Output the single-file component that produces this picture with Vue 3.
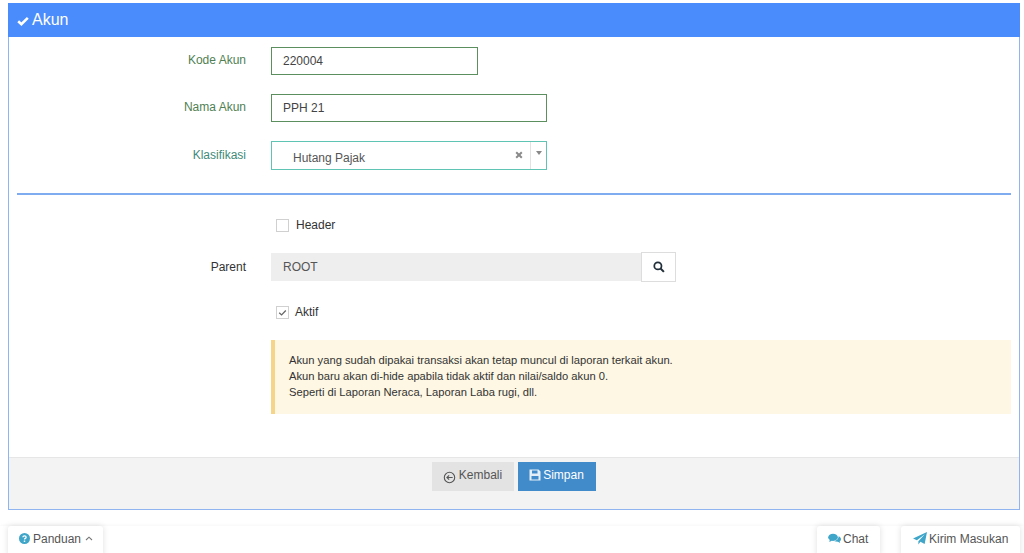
<script setup>
const notes = [
  'Akun yang sudah dipakai transaksi akan tetap muncul di laporan terkait akun.',
  'Akun baru akan di-hide apabila tidak aktif dan nilai/saldo akun 0.',
  'Seperti di Laporan Neraca, Laporan Laba rugi, dll.'
]
</script>

<template>
  <div class="page">
    <section class="panel">
      <header class="panel-head">
        <svg class="head-check" viewBox="0 0 12 10" width="12" height="10"><path d="M1.2 5.2 4.4 8.2 10.8 1.8" fill="none" stroke="#fff" stroke-width="2.6"/></svg>
        <span>Akun</span>
      </header>
      <div class="panel-body">
        <div class="row row-kode">
          <label class="lbl green">Kode Akun</label>
          <div class="field short green-b">220004</div>
        </div>
        <div class="row row-nama">
          <label class="lbl green">Nama Akun</label>
          <div class="field wide green-b">PPH 21</div>
        </div>
        <div class="row row-klas">
          <label class="lbl teal">Klasifikasi</label>
          <div class="select">
            <span class="sel-text">Hutang Pajak</span>
            <svg class="sel-x" viewBox="0 0 8 8" width="8" height="8"><path d="M1.2 1.2 6.8 6.8M6.8 1.2 1.2 6.8" stroke="#8a8a8a" stroke-width="2"/></svg>
            <span class="sel-arrow"><i></i></span>
          </div>
        </div>
        <hr class="rule" />
        <div class="row check-row header-row">
          <span class="box"></span>
          <span class="check-text">Header</span>
        </div>
        <div class="row row-parent">
          <label class="lbl dark">Parent</label>
          <div class="group">
            <div class="readonly">ROOT</div>
            <button class="search" type="button">
              <svg viewBox="0 0 13 13" width="12" height="12"><circle cx="5.3" cy="5.3" r="3.9" fill="none" stroke="#222f3a" stroke-width="1.9"/><path d="M8.2 8.2 11.8 11.8" stroke="#222f3a" stroke-width="2.2"/></svg>
            </button>
          </div>
        </div>
        <div class="row check-row aktif-row">
          <span class="box">
            <svg viewBox="0 0 12 12" width="11" height="11"><path d="M2.4 6.2 5 8.6 9.6 3.8" fill="none" stroke="#666" stroke-width="1.4"/></svg>
          </span>
          <span class="check-text aktif">Aktif</span>
        </div>
        <div class="alert">
          <div v-for="n in notes" :key="n">{{ n }}</div>
        </div>
      </div>
      <footer class="panel-foot">
        <button class="btn back" type="button">
          <svg viewBox="0 0 14 14" width="13" height="13"><circle cx="7" cy="7" r="5.6" fill="none" stroke="#555" stroke-width="1.2"/><path d="M10.4 7H4.4M6.6 4.6 4.2 7l2.4 2.4" fill="none" stroke="#555" stroke-width="1.2"/></svg>
          <span>Kembali</span>
        </button>
        <button class="btn save" type="button">
          <svg viewBox="0 0 12 12" width="12" height="12"><path fill-rule="evenodd" d="M0.5 0.5H9.5L11.5 2.5V11.5H0.5ZM3 1.5V4.5H8.5V1.5ZM2.5 7V10.5H9.5V7Z" fill="#e4eef7"/></svg>
          <span>Simpan</span>
        </button>
      </footer>
    </section>
    <div class="dock">
      <button class="tab guide" type="button">
        <svg viewBox="0 0 12 12" width="11" height="11"><circle cx="6" cy="6" r="6" fill="#3fa5c9"/><path d="M4.2 4.6C4.3 2.7 7.8 2.7 7.8 4.6 7.8 6 6 5.8 6 7.2" fill="none" stroke="#fff" stroke-width="1.4"/><rect x="5.2" y="8.2" width="1.6" height="1.5" fill="#fff"/></svg>
        Panduan
        <svg class="chev" viewBox="0 0 8 5" width="8" height="5"><path d="M1 4 4 1.2 7 4" fill="none" stroke="#777" stroke-width="1.1"/></svg>
      </button>
      <div class="dock-right">
        <button class="tab chat" type="button">
          <svg viewBox="0 0 14 11" width="13" height="11"><ellipse cx="5.4" cy="4.2" rx="5.2" ry="3.9" fill="#3fa5c9"/><path d="M2 6.5 1.4 9.2 4.6 7.6Z" fill="#3fa5c9"/><path d="M11.4 3.2C13 4 14 5 14 6.2 14 7.3 13.3 8 12.6 8.4L13.2 10.4 10.6 9C9 9 7.6 8.8 6.6 8.2 9.2 8 11.6 6 11.4 3.2Z" fill="#3fa5c9"/></svg>
          Chat
        </button>
        <button class="tab send" type="button">
          <svg viewBox="0 0 13 12" width="14" height="13"><path d="M13 0 10.8 11 6.9 9.1 5 11.6V8.5L11 2 3.6 7.7 0 6Z" fill="#3fa5c9"/></svg>
          Kirim Masukan
        </button>
      </div>
    </div>
  </div>
</template>

<style scoped>
.page {
  width: 1024px;
  height: 553px;
  overflow: hidden;
  padding: 3px 4px 0 8px;
  box-sizing: border-box;
  font-family: "Liberation Sans", Arial, sans-serif;
  font-size: 12px;
  color: #333;
  background: #fff;
}
.panel {
  height: 507px;
  box-sizing: border-box;
  border: 1px solid #8fb4ef;
  border-top: 0;
  display: flex;
  flex-direction: column;
}
.panel-head {
  height: 34px;
  margin: 0 -1px;
  padding-left: 9px;
  display: flex;
  align-items: center;
  gap: 3px;
  background: #4a8cfb;
  color: #fff;
  font-size: 16px;
  flex: none;
}
.head-check { margin-top: 1px; }
.panel-body {
  flex: 1;
  padding: 10px 8px 0 8px;
}
.row { display: flex; }
.lbl {
  width: 229px;
  text-align: right;
  margin-right: 25px;
  flex: none;
}
.green { color: #4f7f52; }
.teal { color: #3f8a78; }
.dark { color: #333; }
.field {
  height: 28px;
  box-sizing: border-box;
  padding-left: 11px;
  line-height: 26px;
  color: #444;
}
.green-b { border: 1px solid #5b8f5e; }
.short { width: 207px; }
.wide { width: 276px; }
.row-kode .lbl { line-height: 26px; }
.row-nama { margin-top: 19px; }
.row-nama .lbl { line-height: 26px; }
.row-klas { margin-top: 19px; }
.row-klas .lbl { line-height: 28px; }
.select {
  width: 276px;
  height: 29px;
  box-sizing: border-box;
  border: 1px solid #5fc4b4;
  display: flex;
  align-items: center;
  color: #555;
  position: relative;
}
.sel-text { padding-left: 21px; flex: 1; margin-top: 4px; }
.sel-x { margin-right: 7px; margin-top: -1px; }
.sel-arrow {
  width: 16px;
  height: 27px;
  border-left: 1px solid #e2e2e2;
  display: flex;
  justify-content: center;
  padding-top: 9px;
  box-sizing: border-box;
}
.sel-arrow i {
  width: 0;
  height: 0;
  border-left: 3px solid transparent;
  border-right: 3px solid transparent;
  border-top: 4px solid #888;
}
.rule {
  border: 0;
  height: 2px;
  background: #7fabf0;
  margin: 23px 0 0;
}
.check-row { align-items: center; padding-left: 259px; }
.box {
  width: 13px;
  height: 13px;
  box-sizing: border-box;
  border: 1px solid #d0d0d0;
  display: flex;
  align-items: center;
  justify-content: center;
  flex: none;
}
.check-text { margin-left: 7px; color: #333; }
.check-text.aktif { margin-left: 6px; }
.header-row { margin-top: 23px; }
.row-parent { margin-top: 20px; }
.row-parent .lbl { line-height: 30px; }
.group { display: flex; align-items: center; }
.readonly {
  width: 370px;
  height: 28px;
  line-height: 28px;
  padding-left: 12px;
  box-sizing: border-box;
  background: #eee;
  color: #555;
}
.search {
  width: 35px;
  height: 30px;
  padding: 0;
  background: #fff;
  border: 1px solid #ddd;
  display: flex;
  align-items: center;
  justify-content: center;
}
.aktif-row { margin-top: 23px; }
.alert {
  margin: 21px 0 0 254px;
  height: 74px;
  box-sizing: border-box;
  border-left: 4px solid #f5d58a;
  background: #fdf7e3;
  padding: 12px 14px;
  font-size: 11.2px;
  line-height: 16px;
  color: #333;
}
.panel-foot {
  height: 52px;
  flex: none;
  box-sizing: border-box;
  background: #f3f3f3;
  border-top: 1px solid #e6e6e6;
  display: flex;
  justify-content: center;
  gap: 4px;
  padding: 4px 1px 0 0;
}
.btn {
  height: 29px;
  border: 0;
  font: inherit;
  display: flex;
  align-items: center;
  justify-content: center;
  gap: 3px;
  padding: 0;
}
.btn span { margin-top: -4px; }
.back { width: 82px; background: #e3e3e3; color: #555; }
.back svg { margin-top: 2px; }
.save { width: 78px; background: #428bca; color: #fff; gap: 2px; }
.save svg { margin-top: -3px; }
.dock {
  margin: 16px -4px 0 -8px;
  padding: 0 4px 0 8px;
  display: flex;
  justify-content: space-between;
  height: 40px;
  box-shadow: 0 -1px 3px rgba(0,0,0,.03);
}
.dock-right { display: flex; gap: 21px; }
.tab {
  height: 30px;
  margin-top: 0;
  padding: 0 0 5px 11px;
  border: 0;
  border-radius: 3px 3px 0 0;
  background: #fff;
  box-shadow: 0 0 6px rgba(0,0,0,.13);
  font: inherit;
  color: #555;
  display: flex;
  align-items: center;
  gap: 3px;
  white-space: nowrap;
}
.tab svg { flex: none; }
.guide { width: 95px; }
.chat { width: 63px; gap: 2px; }
.send { width: 119px; padding-left: 12px; gap: 2px; }
.chev { margin-left: 1px; }
</style>

<style>
html, body { margin: 0; background: #fff; overflow: hidden; }
</style>
